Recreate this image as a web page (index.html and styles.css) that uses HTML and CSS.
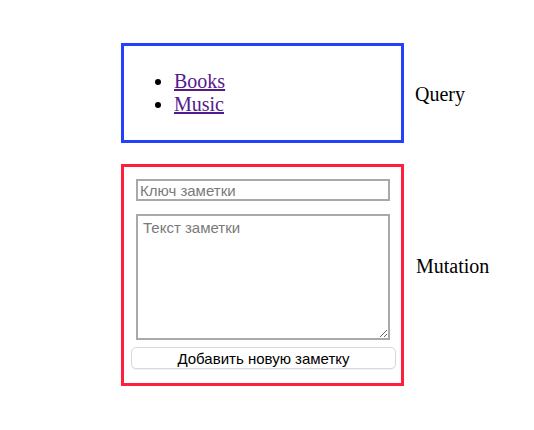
FILE: index.html
```html
<!DOCTYPE html>
<html>
<head>
<meta charset="utf-8">
<link rel="stylesheet" href="styles.css">
</head>
<body>
<div class="page">
  <div class="row">
    <div class="box box-query">
      <ul class="links">
        <li><a href="#">Books</a></li>
        <li><a href="#">Music</a></li>
      </ul>
    </div>
    <div class="label label-query">Query</div>
  </div>
  <div class="row">
    <form class="box box-mutation">
      <input class="field" type="text" placeholder="Ключ заметки">
      <textarea class="area" placeholder="Текст заметки"></textarea>
      <button class="btn" type="button">Добавить новую заметку</button>
    </form>
    <div class="label label-mutation">Mutation</div>
  </div>
</div>
</body>
</html>
```

FILE: styles.css
```css
html, body {
  margin: 0;
  padding: 0;
  background: #ffffff;
}

body {
  font-family: "Liberation Serif", "Times New Roman", serif;
  font-size: 20px;
  color: #000;
}

.page {
  display: flex;
  flex-direction: column;
  gap: 21px;
  padding: 43px 0 0 121px;
}

.row {
  display: flex;
  align-items: center;
}

.box {
  box-sizing: border-box;
  width: 283px;
  border: 3px solid #2340ff;
}

.box-query {
  height: 100px;
  padding: 24px 10px;
}

.links {
  margin: 0;
  padding-left: 40px;
  line-height: 23px;
}

.links a {
  color: #551a8b;
}

.box-mutation {
  border-color: #ff1f3d;
  display: flex;
  flex-direction: column;
  padding: 12px 7px 14px 7px;
  margin: 0;
}

.field,
.area {
  box-sizing: border-box;
  width: 254px;
  margin-left: 5px;
  border: 2px solid #a9a9a9;
  font-family: "Liberation Sans", Arial, sans-serif;
  font-size: 15px;
  color: #000;
  background: #fff;
  outline: none;
}

.field {
  height: 22px;
  padding: 0 2px;
}

.area {
  height: 126px;
  margin-top: 13px;
  padding: 3px 4px 3px 5px;
  resize: both;
}

.field::placeholder,
.area::placeholder {
  color: #7a7a7a;
}

.btn {
  box-sizing: border-box;
  margin-top: 7px;
  height: 22px;
  width: 265px;
  background: #ffffff;
  border: 1px solid #d9d9d9;
  border-radius: 5px;
  box-shadow: 0 1px 1px rgba(0, 0, 0, 0.05);
  font-family: "Liberation Sans", Arial, sans-serif;
  font-size: 15px;
  color: #000;
  padding: 0;
}

.label {
  margin-left: 11px;
}

.label-query {
  margin-top: 2px;
}

.label-mutation {
  margin-top: -18px;
  margin-left: 12px;
}
```
